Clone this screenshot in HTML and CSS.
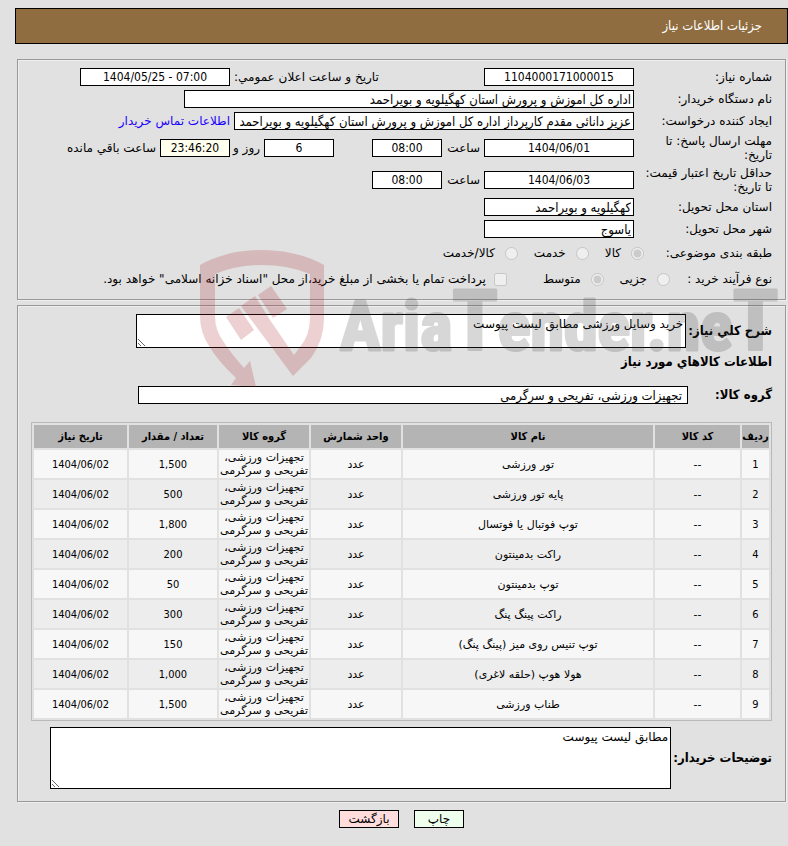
FILE: index.html
```html
<!DOCTYPE html>
<html lang="fa" dir="rtl">
<head>
<meta charset="utf-8">
<title>جزئیات اطلاعات نیاز</title>
<link rel="stylesheet" href="styles.css">
</head>
<body>
<header class="title-bar"><h1>جزئیات اطلاعات نیاز</h1></header>
<main>
<form>
<section class="panel summary">
  <div class="row">
    <label class="caption" for="need-no">شماره نیاز:</label>
    <input class="field medium num" id="need-no" value="1104000171000015" readonly>
    <label class="caption-end" for="announce">تاریخ و ساعت اعلان عمومي:</label>
    <input class="field medium num" id="announce" dir="ltr" value="1404/05/25 - 07:00" readonly>
  </div>
  <div class="row">
    <label class="caption" for="org">نام دستگاه خریدار:</label>
    <input class="field wide" id="org" value="اداره کل اموزش و پرورش استان کهگیلویه و بویراحمد" readonly>
  </div>
  <div class="row">
    <label class="caption" for="creator">ایجاد کننده درخواست:</label>
    <input class="field long" id="creator" value="عزیز دانائی مقدم کارپرداز اداره کل اموزش و پرورش استان کهگیلویه و بویراحمد" readonly>
    <a class="contact" href="#contact">اطلاعات تماس خریدار</a>
  </div>
  <div class="row tall">
    <label class="caption" for="reply-date">مهلت ارسال پاسخ: تا<br>تاریخ:</label>
    <input class="field medium num" id="reply-date" value="1404/06/01" readonly>
    <label class="hour" for="reply-hour">ساعت</label>
    <input class="field short num" id="reply-hour" value="08:00" readonly>
    <input class="field short num days" id="days" value="6" readonly>
    <label class="day" for="days">روز و</label>
    <input class="field short num countdown" id="left" value="23:46:20" readonly>
    <label for="left">ساعت باقي مانده</label>
  </div>
  <div class="row tall">
    <label class="caption" for="price-date">حداقل تاریخ اعتبار قیمت:<br>تا تاریخ:</label>
    <input class="field medium num" id="price-date" value="1404/06/03" readonly>
    <label class="hour" for="price-hour">ساعت</label>
    <input class="field short num" id="price-hour" value="08:00" readonly>
  </div>
  <div class="row">
    <label class="caption" for="province">استان محل تحویل:</label>
    <input class="field medium" id="province" value="کهگیلویه و بویراحمد" readonly>
  </div>
  <div class="row">
    <label class="caption" for="city">شهر محل تحویل:</label>
    <input class="field medium" id="city" value="یاسوج" readonly>
  </div>
  <div class="row options" role="radiogroup" aria-labelledby="category">
    <span class="caption category" id="category">طبقه بندی موضوعی:</span>
    <label class="option"><input type="radio" name="category" checked disabled>کالا</label>
    <label class="option"><input type="radio" name="category" disabled>خدمت</label>
    <label class="option"><input type="radio" name="category" disabled>کالا/خدمت</label>
  </div>
  <div class="row options" role="radiogroup" aria-labelledby="process">
    <span class="caption process" id="process">نوع فرآیند خرید :</span>
    <label class="option"><input type="radio" name="process" disabled>جزیی</label>
    <label class="option"><input type="radio" name="process" checked disabled>متوسط</label>
    <label class="option treasury"><input type="checkbox" disabled>پرداخت تمام یا بخشی از مبلغ خرید،از محل "اسناد خزانه اسلامی" خواهد بود.</label>
  </div>
</section>

<section class="panel details">
  <div class="block">
    <label class="strong" for="description">شرح کلي نیاز:</label>
    <textarea class="field description" id="description" readonly>خرید وسایل ورزشی مطابق لیست پیوست</textarea>
  </div>
  <h2 class="strong">اطلاعات کالاهاي مورد نیاز</h2>
  <div class="block group">
    <label class="strong group-caption" for="group">گروه کالا:</label>
    <input class="field group-field" id="group" value="تجهیزات ورزشی، تفریحی و سرگرمی" readonly>
  </div>
  <table class="items">
    <colgroup><col class="c-row"><col class="c-code"><col><col class="c-unit"><col class="c-group"><col class="c-qty"><col class="c-date"></colgroup>
    <thead><tr><th>ردیف</th><th>کد کالا</th><th>نام کالا</th><th>واحد شمارش</th><th>گروه کالا</th><th>تعداد / مقدار</th><th>تاریخ نیاز</th></tr></thead>
    <tbody>
    <tr><td class="figure">1</td><td>--</td><td>تور ورزشی</td><td>عدد</td><td>تجهیزات ورزشی،<br>تفریحی و سرگرمی</td><td class="figure">1,500</td><td class="figure">1404/06/02</td></tr>
    <tr><td class="figure">2</td><td>--</td><td>پایه تور ورزشی</td><td>عدد</td><td>تجهیزات ورزشی،<br>تفریحی و سرگرمی</td><td class="figure">500</td><td class="figure">1404/06/02</td></tr>
    <tr><td class="figure">3</td><td>--</td><td>توپ فوتبال یا فوتسال</td><td>عدد</td><td>تجهیزات ورزشی،<br>تفریحی و سرگرمی</td><td class="figure">1,800</td><td class="figure">1404/06/02</td></tr>
    <tr><td class="figure">4</td><td>--</td><td>راکت بدمینتون</td><td>عدد</td><td>تجهیزات ورزشی،<br>تفریحی و سرگرمی</td><td class="figure">200</td><td class="figure">1404/06/02</td></tr>
    <tr><td class="figure">5</td><td>--</td><td>توپ بدمینتون</td><td>عدد</td><td>تجهیزات ورزشی،<br>تفریحی و سرگرمی</td><td class="figure">50</td><td class="figure">1404/06/02</td></tr>
    <tr><td class="figure">6</td><td>--</td><td>راکت پینگ پنگ</td><td>عدد</td><td>تجهیزات ورزشی،<br>تفریحی و سرگرمی</td><td class="figure">300</td><td class="figure">1404/06/02</td></tr>
    <tr><td class="figure">7</td><td>--</td><td>توپ تنیس روی میز (پینگ پنگ)</td><td>عدد</td><td>تجهیزات ورزشی،<br>تفریحی و سرگرمی</td><td class="figure">150</td><td class="figure">1404/06/02</td></tr>
    <tr><td class="figure">8</td><td>--</td><td>هولا هوپ (حلقه لاغری)</td><td>عدد</td><td>تجهیزات ورزشی،<br>تفریحی و سرگرمی</td><td class="figure">1,000</td><td class="figure">1404/06/02</td></tr>
    <tr><td class="figure">9</td><td>--</td><td>طناب ورزشی</td><td>عدد</td><td>تجهیزات ورزشی،<br>تفریحی و سرگرمی</td><td class="figure">1,500</td><td class="figure">1404/06/02</td></tr>
    </tbody>
  </table>
  <div class="block">
    <label class="strong" for="notes">توضیحات خریدار:</label>
    <textarea class="field notes" id="notes" readonly>مطابق لیست پیوست</textarea>
  </div>
</section>

<div class="actions">
  <button class="field print" type="button">چاپ</button>
  <button class="field back" type="button">بازگشت</button>
</div>
</form>
</main>
<svg class="watermark" viewBox="0 0 592 142" direction="ltr" aria-hidden="true">
  <g class="mark">
    <path d="M4 17Q31 2 66 2Q101 2 128 17V70Q128 92 115 110L97 128L62 81L45 58L59 48L74 72L98 107L104 99Q114 87 114 70V26Q92 17 66 17Q40 17 19 26V68Q19 82 27 93Q34 104 48 120L54 113L60 139L35 137L40 130Q22 113 13 98Q4 84 4 68Z"/>
    <path d="M30 69L43 60L58 82L45 92ZM62 47L75 38L91 61L77 70Z"/>
  </g>
  <text class="wordmark" x="144" y="102">Aria<tspan class="tall-cap">T</tspan>ender.ne<tspan class="tall-cap">T</tspan></text>
</svg>
</body>
</html>
```
FILE: styles.css
```css
* { box-sizing: border-box; }

body {
  position: relative;
  margin: 0;
  padding: 8px 0 18px 15px;
  background: #e1e1e1;
  color: #000;
  font: 12px/14px "DejaVu Sans", sans-serif;
}

.title-bar {
  display: flex;
  align-items: center;
  height: 36px;
  padding: 0 25px;
  border: 1px solid #000;
  background: #8f6d40;
  color: #fff;
}

h1, h2, .strong {
  margin: 0;
  font: bold 13px/14px "DejaVu Sans Condensed", "DejaVu Sans", sans-serif;
}
h1 { font-weight: normal; }

form { margin: 15px 2px 0; }

.panel {
  border: 1px solid #999;
  box-shadow: inset 1px 1px #eee, 1px 1px #eee;
  padding: 8px 13px 12px;
}

.summary { display: flex; flex-direction: column; gap: 4px; padding-bottom: 9px; }
.row { display: flex; align-items: center; gap: 4px; min-height: 18px; white-space: nowrap; }
.tall { min-height: 28px; }
.options { min-height: 22px; gap: 16px; }

.caption { flex: none; width: 134px; }
.category { width: 112px; }
.process { width: 86px; }
.caption-end { width: 246px; text-align: left; }
.hour { width: 34px; }
.day { width: 26px; }
.contact { color: #1a00ff; text-decoration: none; }

.field {
  height: 18px;
  margin: 0;
  padding: 0 2px;
  border: 1px solid #000;
  border-radius: 0;
  background: #fff;
  color: #000;
  font: inherit;
}
input.field { font: 13px "DejaVu Sans Condensed", "DejaVu Sans", sans-serif; }
input.num { text-align: center; font: 12px "DejaVu Sans Condensed", "DejaVu Sans", sans-serif; }
.medium { width: 150px; }
.wide { width: 450px; }
.long { width: 400px; }
.short { width: 70px; }
.days { margin-right: 34px; }
.countdown { background: #ffffee; }

.option { display: flex; align-items: center; gap: 10px; }
.option input { margin: 0; width: 13px; height: 13px; }
.treasury { gap: 8px; margin-right: 20px; }

.details { margin-top: 5px; }
.block { display: flex; align-items: center; gap: 2px; }
textarea.field { padding: 2px; }
.description { width: 550px; height: 34px; }
h2.strong { margin: 7px 0 17px; }
.group-caption { width: 82px; }
.group-field { width: 550px; padding: 0 5px; }

.items {
  width: 100%;
  margin: 18px 0 6px;
  border: 1px solid #b9b9b9;
  border-spacing: 2px;
  table-layout: fixed;
  font-size: 11px;
  line-height: 13px;
  text-align: center;
}
.items th, .items td { padding: 0; height: 28px; white-space: nowrap; }
.items th { height: 23px; background: #b4b4b4; }
.items th, .items .figure { font-family: "DejaVu Sans Condensed", "DejaVu Sans", sans-serif; }
.items td { background: #f7f7f7; }
.items tr:nth-child(even) td { background: #ededed; }
.c-row { width: 27px; }
.c-code { width: 85px; }
.c-unit { width: 90px; }
.c-group { width: 90px; }
.c-qty { width: 88px; }
.c-date { width: 93px; }

.notes { width: 621px; height: 62px; }

.actions { display: flex; justify-content: center; gap: 15px; margin-top: 8px; }
.print { width: 50px; background: #eeffee; }
.back { width: 60px; background: #ffdddd; }

.watermark {
  position: absolute;
  top: 248px;
  left: 196px;
  width: 592px;
  height: 142px;
  pointer-events: none;
}
.mark { fill: #aa1923; opacity: 0.2; }
.wordmark {
  fill: #3c3c3c;
  stroke: #3c3c3c;
  stroke-width: 3px;
  stroke-linejoin: round;
  opacity: 0.2;
  font: bold 68px "Liberation Sans Narrow", "Roboto Condensed", "DejaVu Sans Condensed", sans-serif;
}
.tall-cap { font-size: 84px; }
```
